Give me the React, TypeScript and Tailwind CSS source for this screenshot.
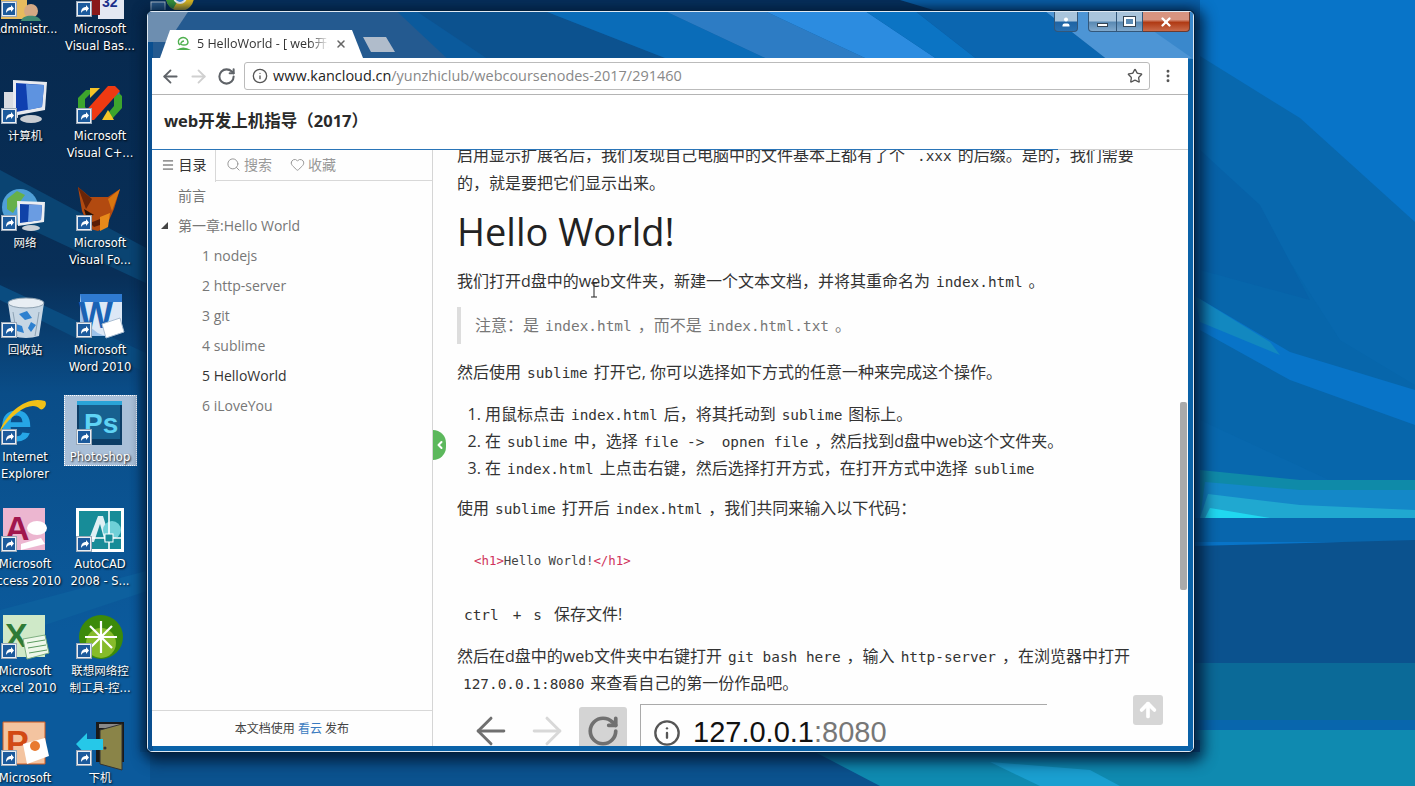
import React from "react";
import { ArrowLeft, ArrowRight, RotateCw, Star, Menu, Search, Heart, Info, EllipsisVertical, X, ChevronLeft, ArrowUp, User } from "lucide-react";

function Wallpaper() {
  return (
    <svg className="absolute inset-0" width="1415" height="786" viewBox="0 0 1415 786">
      <defs>
        <linearGradient id="left" x1="0" y1="0" x2="0" y2="1">
          <stop offset="0" stopColor="#07294e" />
          <stop offset="0.35" stopColor="#082f58" />
          <stop offset="0.5" stopColor="#0a4d88" />
          <stop offset="0.8" stopColor="#0b5a9c" />
          <stop offset="1" stopColor="#0b5a9c" />
        </linearGradient>
      </defs>
      <rect width="1415" height="786" fill="#0874c8" />
      <rect x="0" y="0" width="150" height="786" fill="url(#left)" />
      <polygon points="0,170 150,250 150,285 0,215" fill="#0a4472" />
      <polygon points="0,285 150,355 150,375 0,300" fill="#0a4c80" />
      <polygon points="0,610 150,570 150,590 0,640" fill="#0d609e" />
      <rect x="150" y="0" width="1050" height="30" fill="#07305c" />
      <polygon points="900,0 1200,0 1200,30 1000,30" fill="#0a5fa8" />
      <polygon points="1200,56 1300,118 1415,222 1415,520 1200,520" fill="#0868ae" />
      <polygon points="1200,150 1260,208 1290,262 1340,340 1415,385 1415,520 1200,420" fill="#0766ab" />
      <polygon points="1200,150 1260,205 1290,262 1310,300 1200,270" fill="#0762a8" />
      <polygon points="1195,296 1290,352 1415,390 1415,425 1290,380 1200,330" fill="#0874c8" />
      <polygon points="1195,296 1270,342 1280,355 1200,322" fill="#1288c0" />
      <polygon points="1200,470 1300,480 1415,480 1415,518 1200,518" fill="#0f8aa8" />
      <polygon points="1205,482 1300,490 1415,490 1415,518 1200,518" fill="#1488c8" />
      <polygon points="1208,494 1300,505 1415,510 1415,518 1200,518" fill="#20a8d0" />
      <polygon points="1210,508 1270,518 1205,518" fill="#20d8f0" />
      <rect x="1194" y="518" width="221" height="24" fill="#0866ad" />
      <polygon points="1194,546 1415,540 1415,663 1194,663" fill="#0b528e" />
      <rect x="1194" y="663" width="221" height="57" fill="#0b6a98" />
      <rect x="1194" y="720" width="221" height="10" fill="#0866ad" />
      <rect x="1194" y="730" width="221" height="56" fill="#0f8ab0" />
      <rect x="140" y="740" width="1060" height="46" fill="#0b528e" />
      <rect x="0" y="752" width="150" height="34" fill="#0b5a9c" />
      <polygon points="815,752 1200,752 1200,786 880,786" fill="#0f8ab0" />
      <polygon points="990,762 1090,770 1120,786 1040,786" fill="#1a9fd0" />
    </svg>
  );
}

function Shortcut() {
  return (
    <svg className="absolute left-0 top-[28px]" width="16" height="16" viewBox="0 0 16 16">
      <rect x="0.5" y="0.5" width="15" height="15" fill="#e8eef4" stroke="#9aa8b8" />
      <rect x="2" y="2" width="12" height="12" fill="#1c5a9c" />
      <path d="M5 12c0-4 2-6 5-6V4l3 3.5L10 11V9c-2 0-4 1-5 3z" fill="#fff" />
    </svg>
  );
}

const icons: Record<string, React.ReactNode> = {
  admin: (<><path d="M0 20h26v26H0z" fill="#e6bb5e" /><circle cx="30" cy="38" r="7" fill="#d3a884" /><path d="M20 48c1-7 18-7 20 0z" fill="#3f8a72" /></>),
  vb: (<><path d="M22 18h26v28H22z" fill="#e4e8f2" /><text x="26" y="34" fontSize="14" fontWeight="700" fill="#1a2f8a" fontFamily="Liberation Sans">32</text><path d="M14 28l10-8v22H14z" fill="#8a1a1a" /></>),
  pc: (<><path d="M3 12h14v26l-14-4z" fill="#d9dce2" /><path d="M12 0l34 2-2 28-32 6z" fill="#e8eaef" /><path d="M15 3l28 2-2 22-26 5z" fill="#0f3fb0" /><path d="M25 4l18 1-2 22-14 3z" fill="#5e93e0" /><ellipse cx="30" cy="39" rx="11" ry="4" fill="#c8ccd2" /></>),
  vc: (<><path d="M2 18l8-8 8 0-9 9v8l5 5-5 5-7-8z" fill="#3da52d" /><path d="M14 8h10l-10 10z" fill="#f6c428" /><path d="M28 38h9l9-10V16l-7-7-5 5 4 4v8z" fill="#3da52d" /><path d="M37 6l7 7-2 2-8-8z" fill="#1f7fd6" /><path d="M26 40h12l-6-10z" fill="#f6c428" /><path d="M32 6h7l5 5-26 29h-6l-5-6z" fill="#ef3a12" /></>),
  globe: (<><circle cx="19" cy="20" r="18" fill="#4f9fd6" /><path d="M6 12l10-8 8 4-6 8-6 10-6-4z" fill="#67b04a" /><path d="M18 30l8-2 2 8-6 2z" fill="#3f8f3c" /><path d="M16 14l28 1-1 20-26 4z" fill="#eceef2" /><path d="M19 17l22 1-1 15-21 3z" fill="#1042a8" /><path d="M28 18l13 0-1 15-13 2z" fill="#6a9ce2" /><ellipse cx="30" cy="41" rx="9" ry="3" fill="#cbd0d6" /></>),
  fox: (<><path d="M2 0l12 10h18l12-8-6 20-8 18-8 4-8-2-8-18z" fill="#b24a10" /><path d="M2 0l8 22 6-10z" fill="#6a2508" /><path d="M44 2l-8 22-4-12z" fill="#d8760f" /><path d="M8 22l10 6-8 1z" fill="#2a1206" /><path d="M24 30l10-4-2 14-8 4z" fill="#e88a1a" /><path d="M14 36l10-4v6l-6 2z" fill="#5a1d06" /></>),
  bin: (<><path d="M7 9h36l-5 33q-13 4-26 0z" fill="#c6d6e4" /><ellipse cx="25" cy="9" rx="18" ry="5" fill="#e8eef4" stroke="#8da0b0" /><path d="M18 20l8-3 5 7-7 2zM15 30l6 2 2 7-7-2zM30 28l5 3-5 7-3-4z" fill="#2e80cf" /><path d="M12 18l4 24M38 18l-4 24" stroke="#8ea3b5" strokeWidth="1" /></>),
  word: (<><path d="M4 0h42v32l-10 10H4z" fill="#dce8f6" /><path d="M4 0h42v8H4z" fill="#2f7ad0" /><path d="M4 0q4 40 28 42H4z" fill="#9dc3ea" /><text x="3" y="34" fontSize="36" fontWeight="700" fill="#1a62b4" fontFamily="Liberation Sans">W</text><path d="M26 30l18-6 4 14-18 6z" fill="#fff" stroke="#a9bdd2" /></>),
  ie: (<><text x="-1" y="40" fontSize="58" fontWeight="700" fill="#26a6e6" fontFamily="Liberation Sans">e</text><path d="M-2 32C4 14 24-6 44 0c3 4-2 10-5 8C32 0 14 8-2 32z" fill="#f0c018" /></>),
  ps: (<><rect x="1" y="0" width="45" height="44" fill="#0d3d66" /><rect x="1" y="0" width="45" height="4" fill="#2aa4d8" /><rect x="3" y="4" width="41" height="34" fill="#17608f" /><text x="8" y="32" fontSize="28" fontWeight="700" fill="#5fd3f4" fontFamily="Liberation Sans">Ps</text></>),
  access: (<><path d="M2 0h42v42H8q-6 0-6-8z" fill="#ecb6d0" /><text x="4" y="32" fontSize="34" fontWeight="700" fill="#a1164e" fontFamily="Liberation Sans">A</text><ellipse cx="36" cy="20" rx="10" ry="7" fill="#fff" /><path d="M20 36l20-6 4 6-24 6z" fill="#fff" /></>),
  cad: (<><rect x="0" y="0" width="48" height="44" fill="#fff" /><rect x="3" y="3" width="42" height="38" fill="#178c98" /><path d="M12 34L22 8h5l8 26h-6l-5-18-6 18z" fill="#dff0f4" /><circle cx="36" cy="22" r="9" fill="#6fd0d8" /><path d="M33 3v38M3 30h42" stroke="#fff" strokeWidth="1.6" /><rect x="29" y="26" width="8" height="8" fill="#178c98" stroke="#fff" /></>),
  excel: (<><path d="M2 0h42v42H8q-6 0-6-8z" fill="#cfe9c8" /><text x="4" y="32" fontSize="34" fontWeight="700" fill="#2f7a36" fontFamily="Liberation Sans">X</text><path d="M22 24l22-4 4 18-22 6z" fill="#eef8ea" stroke="#7fb082" /><path d="M26 28l18-3M27 33l18-3M28 38l18-3" stroke="#5b9a60" /></>),
  lenovo: (<><circle cx="25" cy="22" r="22" fill="#3c8a0a" /><circle cx="25" cy="28" r="15" fill="#86bb2a" /><path d="M25 6v32M9 22h32M14 11l22 22M36 11L14 33" stroke="#fff" strokeWidth="2.2" /></>),
  ppt: (<><path d="M2 0h42v42H8q-6 0-6-8z" fill="#f4c4a0" stroke="#d05a20" /><text x="5" y="32" fontSize="34" fontWeight="700" fill="#d24a14" fontFamily="Liberation Sans">P</text><path d="M22 22l22-6 4 18-22 8z" fill="#fff" /><circle cx="34" cy="24" r="5" fill="#e87a30" /></>),
  door: (<><path d="M20 0h28v40H20z" fill="#1a1a1a" /><path d="M23 2h22v4H23z" fill="#888" /><path d="M24 8l22-6v46l-22-6z" fill="#8a8448" stroke="#333" /><circle cx="29" cy="26" r="1.5" fill="#333" /><path d="M0 22l11-11v6h16v11H11v6z" fill="#26c8e8" /></>),
};

type D = { col: number; row: number; label: React.ReactNode; icon: string };
const desk: D[] = [
  { col: 0, row: 0, label: "Administr...", icon: "admin" },
  { col: 1, row: 0, label: <>Microsoft<br />Visual Bas...</>, icon: "vb" },
  { col: 0, row: 1, label: "计算机", icon: "pc" },
  { col: 1, row: 1, label: <>Microsoft<br />Visual C+...</>, icon: "vc" },
  { col: 0, row: 2, label: "网络", icon: "globe" },
  { col: 1, row: 2, label: <>Microsoft<br />Visual Fo...</>, icon: "fox" },
  { col: 0, row: 3, label: "回收站", icon: "bin" },
  { col: 1, row: 3, label: <>Microsoft<br />Word 2010</>, icon: "word" },
  { col: 0, row: 4, label: <>Internet<br />Explorer</>, icon: "ie" },
  { col: 1, row: 4, label: "Photoshop", icon: "ps" },
  { col: 0, row: 5, label: <>Microsoft<br />Access 2010</>, icon: "access" },
  { col: 1, row: 5, label: <>AutoCAD<br />2008 - S...</>, icon: "cad" },
  { col: 0, row: 6, label: <>Microsoft<br />Excel 2010</>, icon: "excel" },
  { col: 1, row: 6, label: <>联想网络控<br />制工具-控...</>, icon: "lenovo" },
  { col: 0, row: 7, label: "Microsoft", icon: "ppt" },
  { col: 1, row: 7, label: "下机", icon: "door" },
];

function DeskIcon({ d }: { d: D }) {
  const left = d.col === 0 ? -13 : 62;
  const top = -27 + d.row * 107;
  return (
    <div className="absolute flex w-[76px] flex-col items-center" style={{ left, top }}>
      <div className="relative h-[44px] w-[48px]">
        <svg width="48" height="48" viewBox="0 0 48 48" className="overflow-visible">{icons[d.icon]}</svg>
        <Shortcut />
      </div>
      <div className="mt-[4px] whitespace-nowrap text-center font-['DejaVu_Sans','Noto_Sans_CJK_SC',sans-serif] text-[11.5px] leading-[17px] text-white [text-shadow:1px_1px_2px_#000]">
        {d.label}
      </div>
    </div>
  );
}

function Frame() {
  return (
    <svg className="absolute inset-0 h-full w-full" viewBox="0 0 1047 741" preserveAspectRatio="none">
      <rect width="1047" height="741" fill="#0a62a8" />
      <rect width="1047" height="47" fill="#0b5a9c" />
      <polygon points="0,0 250,0 300,47 0,47" fill="#245a90" />
      <polygon points="0,0 40,0 20,30 0,30" fill="#6d8eb0" />
      <polygon points="270,0 400,0 520,47 340,47" fill="#0c528f" />
      <polygon points="400,0 520,0 620,47 520,47" fill="#0a6cb8" />
      <polygon points="520,0 620,0 720,47 620,47" fill="#2d7cc4" />
      <polygon points="620,0 720,0 790,47 720,47" fill="#2c8ce0" />
      <polygon points="720,0 770,0 830,47 790,47" fill="#0b74c4" />
      <polygon points="770,0 900,0 960,47 830,47" fill="#0b66b0" />
      <polygon points="900,0 1047,0 1047,47 960,47" fill="#4d95d5" />
      <polygon points="980,0 1047,0 1047,47" fill="#3a88cc" />
      <polygon points="0,30 5,30 5,741 0,741" fill="#0a4f90" />
    </svg>
  );
}

function WinControls() {
  return (
    <div className="absolute right-[3px] top-0 flex h-[19px] items-start">
      <div className="mr-[10px] flex h-[20px] w-[24px] items-center justify-center rounded-b-[4px] border border-t-0 border-[#33577a] bg-[linear-gradient(#a8c4dc_0_45%,#1f64a4_55%,#2a70b0)]">
        <User size={12} strokeWidth={0} fill="#fff" />
      </div>
      <div className="flex h-[20px] w-[29px] items-end justify-center rounded-bl-[4px] border border-t-0 border-[#33577a] bg-[linear-gradient(#a8c4dc_0_45%,#5a8ab4_55%,#80a8cc)] pb-[4px]">
        <div className="h-[4px] w-[11px] border border-[#345] bg-white" />
      </div>
      <div className="flex h-[20px] w-[26px] items-center justify-center border-b border-r border-[#33577a] bg-[linear-gradient(#a8c4dc_0_45%,#5a8ab4_55%,#80a8cc)]">
        <div className="h-[9px] w-[11px] border-2 border-white bg-[#5a8ab4] outline outline-1 outline-[#345]" />
      </div>
      <div className="flex h-[20px] w-[47px] items-center justify-center rounded-br-[4px] border-b border-r border-[#6a3a30] bg-[linear-gradient(#d89480_0_40%,#b03a14_55%,#c86a4a)]">
        <X size={14} strokeWidth={4} color="#fff" />
      </div>
    </div>
  );
}

function Code({ children, cls }: { children: React.ReactNode; cls?: string }) {
  return <code className={`mx-[3px] whitespace-pre px-[3px] font-['DejaVu_Sans_Mono',monospace] text-[14.4px] leading-none ${cls ?? ""}`}>{children}</code>;
}

const sideItems = ["1 nodejs", "2 http-server", "3 git", "4 sublime", "5 HelloWorld", "6 iLoveYou"];

export default function App() {
  return (
    <div className="relative h-[786px] w-[1415px] overflow-hidden bg-[#0874c8] font-['Open_Sans','Noto_Sans_CJK_SC',sans-serif]">
      <Wallpaper />
      {/* selected desktop icon */}
      <div className="absolute left-[64px] top-[395px] h-[71px] w-[73px] border border-dotted border-white bg-[#a9bfd8]" />
      {desk.map((d, i) => <DeskIcon key={i} d={d} />)}

      {/* chrome icon peeking at the top */}
      <svg className="absolute left-[150px] top-0" width="46" height="12" viewBox="0 0 46 12">
        <rect x="1" y="2" width="14" height="14" fill="#2b5a88" stroke="#b8c4d0" />
        <circle cx="30" cy="-3" r="14" fill="#e8c020" />
        <path d="M16 -3a14 14 0 0 0 7 12l7-12z" fill="#3a9a3a" />
        <circle cx="30" cy="-3" r="6" fill="#3a88e0" stroke="#fff" strokeWidth="2" />
      </svg>

      {/* browser window */}
      <div className="absolute left-[147px] top-[11px] flex h-[741px] w-[1047px] flex-col overflow-hidden rounded-[5px] border border-[#dfe9f3] pl-[4px] pr-[5px] pb-[5px] shadow-[0_0_0_1px_#03203c,4px_4px_14px_6px_rgba(2,28,58,0.85),-3px_0_10px_2px_rgba(2,28,58,0.5)]">
        <Frame />
        <WinControls />

        {/* tab strip */}
        <div className="relative flex h-[46px] shrink-0 items-end pl-[8px]">
          <div className="flex h-[28px] w-[203px] items-center bg-white pl-[15px] pr-[15px] [clip-path:polygon(0_100%,10px_0,192px_0,203px_100%)]">
            <svg width="17" height="16" viewBox="0 0 17 16" className="shrink-0">
              <path d="M5 9a4 4 0 0 1 1-7 5 5 0 0 1 7 4q0 3-4 3t-3-2 3-2" fill="none" stroke="#4fb04f" strokeWidth="1.4" />
              <path d="M1 14q7-5 15 0z" fill="#4fb04f" />
            </svg>
            <span className="ml-[5px] w-[132px] overflow-hidden whitespace-nowrap text-[12.5px] text-[#333] [mask-image:linear-gradient(to_right,#000_85%,transparent)]">5 HelloWorld - [ web开发上机指导</span>
            <X size={12} strokeWidth={3} color="#666" className="ml-[6px] shrink-0" />
          </div>
          <div className="mb-[6px] h-[15px] w-[32px] bg-[#b0bccb] [clip-path:polygon(0_0,23px_0,32px_100%,8px_100%)]" />
        </div>

        {/* toolbar */}
        <div className="relative flex h-[37px] shrink-0 items-center border-b border-[#b4b4b4] bg-white pl-[8px]">
          <ArrowLeft size={21} color="#5f6368" strokeWidth={2.1} />
          <ArrowRight size={21} color="#d0d0d0" strokeWidth={2.1} className="ml-[7px]" />
          <RotateCw size={19} color="#5f6368" strokeWidth={2.6} className="ml-[8px]" />
          <div className="ml-[8px] flex h-[28px] w-[906px] items-center rounded-[3px] border border-[#bbb] pl-[7px] pr-[6px]">
            <Info size={16} color="#555" strokeWidth={2} />
            <span className="ml-[5px] whitespace-nowrap text-[14.45px] text-[#222]">www.kancloud.cn<span className="text-[#888]">/yunzhiclub/webcoursenodes-2017/291460</span></span>
            <Star size={16} color="#555" strokeWidth={2} className="ml-auto" />
          </div>
          <EllipsisVertical size={16} color="#555" strokeWidth={2.4} className="ml-[10px]" />
        </div>

        {/* doc header */}
        <div className="relative flex h-[54px] shrink-0 items-center bg-white pl-[12px] pb-[1px] text-[16.5px] font-bold text-[#2a2a2a]">web开发上机指导（2017）</div>
        <div className="relative flex h-px shrink-0">
          <div className="w-[906px] bg-[#2a75b8]" />
          <div className="flex-1 bg-[#cfcfcf]" />
        </div>

        {/* main */}
        <div className="relative flex min-h-0 flex-1 bg-[#fefefe]">
          <aside className="flex w-[281px] shrink-0 flex-col border-r border-[#d5d5d5]">
            <div className="flex h-[31px] items-center border-b border-[#d8d8d8] pb-[2px] text-[14px] text-[#999]">
              <div className="-mb-[3px] flex h-[32px] w-[64px] items-center justify-center gap-[4px] border-r border-[#d8d8d8] bg-[#fefefe] pb-[2px] text-[#333]">
                <Menu size={14} strokeWidth={1.5} />目录
              </div>
              <Search size={15} strokeWidth={1.6} className="ml-[10px]" />
              <span className="ml-[3px]">搜索</span>
              <Heart size={15} strokeWidth={1.6} className="ml-[18px]" />
              <span className="ml-[3px]">收藏</span>
            </div>
            <div className="flex flex-1 flex-col text-[14px] leading-[30px] text-[#777]">
              <div className="pl-[26px]">前言</div>
              <div className="relative pl-[26px]">
                <svg className="absolute left-[9px] top-[11px]" width="7" height="7" viewBox="0 0 7 7"><path d="M7 0v7H0z" fill="#444" /></svg>
                第一章:Hello World
              </div>
              {sideItems.map((s) => (
                <div key={s} className={s.startsWith("5") ? "pl-[50px] text-[#333]" : "pl-[50px]"}>{s}</div>
              ))}
            </div>
            <div className="flex h-[36px] items-center justify-center border-t border-[#d8d8d8] text-[12px] text-[#444]">
              本文档使用&nbsp;<span className="text-[#3a7bc0]">看云</span>&nbsp;发布
            </div>
          </aside>

          <main className="relative min-w-0 flex-1 overflow-hidden pl-[24px] pr-[40px] text-[16px] leading-[27.2px] text-[#333]">
            <p className="-mt-[9px] leading-[28px]">启用显示扩展名后，我们发现自己电脑中的文件基本上都有了个<Code cls="ml-[9px]">.xxx</Code>的后缀。是的，我们需要的，就是要把它们显示出来。</p>
            <h1 className="mt-[8px] text-[38px] font-normal leading-[52px] text-[#222]">Hello World!</h1>
            <p className="mt-[11px]">我们打开d盘中的web文件夹，新建一个文本文档，并将其重命名为<Code>index.html</Code>。</p>
            <blockquote className="mt-[12px] border-l-4 border-[#ddd] py-[5px] pl-[14px] text-[#777]">注意：是<Code>index.html</Code>，而不是<Code>index.html.txt</Code>。</blockquote>
            <p className="mt-[15px]">然后使用<Code>sublime</Code>打开它, 你可以选择如下方式的任意一种来完成这个操作。</p>
            <ol className="mt-[14px] list-decimal pl-[28px]">
              <li>用鼠标点击<Code>index.html</Code>后，将其托动到<Code>sublime</Code>图标上。</li>
              <li>在<Code>sublime</Code>中，选择<Code>file -&gt;  opnen file</Code>，然后找到d盘中web这个文件夹。</li>
              <li>在<Code>index.html</Code>上点击右键，然后选择打开方式，在打开方式中选择<Code>sublime</Code></li>
            </ol>
            <p className="mt-[13px]">使用<Code>sublime</Code>打开后<Code>index.html</Code>，我们共同来输入以下代码：</p>
            <pre className="mt-[25px] pl-[17px] font-['DejaVu_Sans_Mono',monospace] text-[12.4px] leading-[27px] text-[#444]"><span className="text-[#d0345c]">&lt;h1&gt;</span>Hello World!<span className="text-[#d0345c]">&lt;/h1&gt;</span></pre>
            <p className="mt-[27px] pl-[7px]"><code className="font-['DejaVu_Sans_Mono',monospace] text-[14.4px] leading-none">ctrl</code><code className="ml-[14px] font-['DejaVu_Sans_Mono',monospace] text-[14.4px] leading-none">+</code><code className="ml-[12px] font-['DejaVu_Sans_Mono',monospace] text-[14.4px] leading-none">s</code><span className="ml-[12px]">保存文件!</span></p>
            <p className="mt-[14px]">然后在d盘中的web文件夹中右键打开<Code>git bash here</Code>，输入<Code>http-server</Code>，在浏览器中打开<Code>127.0.0.1:8080</Code>来查看自己的第一份作品吧。</p>
            <div className="mt-[7px] flex h-[50px] items-start pl-[12px]">
              <ArrowLeft size={44} color="#707070" strokeWidth={1.6} className="mt-[5px]" />
              <ArrowRight size={44} color="#d8d8d8" strokeWidth={1.6} className="ml-[12px] mt-[5px]" />
              <div className="ml-[10px] mt-[3px] flex h-[47px] w-[48px] items-center justify-center rounded-t-[3px] bg-[#d4d4d4]">
                <RotateCw size={34} color="#707070" strokeWidth={2.6} />
              </div>
              <div className="ml-[13px] flex h-[50px] w-[407px] items-center border-l border-t border-[#aaa] pl-[12px] pt-[6px]">
                <Info size={28} color="#555" strokeWidth={2} />
                <span className="ml-[12px] font-['Liberation_Sans',sans-serif] text-[29px] leading-none text-[#111]">127.0.0.1<span className="text-[#777]">:8080</span></span>
              </div>
            </div>

            <div className="absolute left-0 top-[280px] flex h-[30px] w-[13px] items-center justify-center rounded-r-full bg-[#5cb85c]">
              <ChevronLeft size={12} strokeWidth={4} color="#fff" />
            </div>
            <div className="absolute left-[700px] top-[545px] flex h-[30px] w-[30px] items-center justify-center rounded-[3px] bg-[#d6d6d6]">
              <ArrowUp size={22} strokeWidth={4} color="#fff" />
            </div>
            <div className="absolute left-[747px] top-[252px] h-[188px] w-[7px] rounded-[2px] bg-[#aaa]" />
            {/* text cursor */}
            <svg className="absolute left-[157px] top-[132px]" width="8" height="16" viewBox="0 0 8 16"><path d="M1 1h6M4 1v14M1 15h6" stroke="#222" strokeWidth="1" fill="none" /></svg>
          </main>
        </div>
      </div>
    </div>
  );
}
